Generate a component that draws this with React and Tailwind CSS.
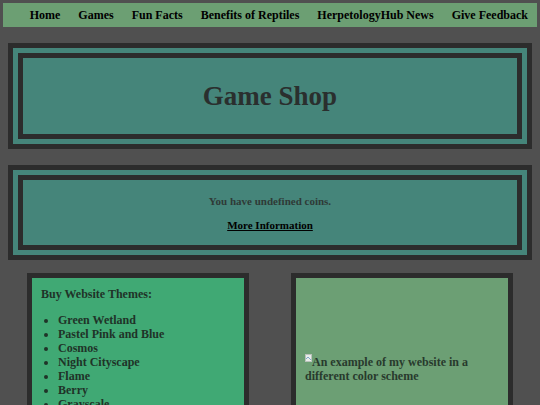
import React from "react";

const navLinks = [
  "Home",
  "Games",
  "Fun Facts",
  "Benefits of Reptiles",
  "HerpetologyHub News",
  "Give Feedback",
];

const themes = [
  "Green Wetland",
  "Pastel Pink and Blue",
  "Cosmos",
  "Night Cityscape",
  "Flame",
  "Berry",
  "Grayscale",
  "Desert Dunes",
];

function FramedBox({ innerHeight, children }) {
  return (
    <div className="mx-[8px] border-[5px] border-[#2c2c2c] bg-[#45857a] p-[5px]">
      <div
        className={`border-[5px] border-[#2c2c2c] bg-[#45857a] flex flex-col items-center justify-center ${innerHeight}`}
      >
        {children}
      </div>
    </div>
  );
}

function BrokenImageIcon() {
  return (
    <svg
      width="7"
      height="8"
      viewBox="0 0 7 8"
      className="inline-block align-top mt-[-1px] mr-[0px]"
    >
      <rect x="0.5" y="0.5" width="6" height="7" fill="#e8ece9" stroke="#b9c2bb" strokeWidth="1" />
      <path d="M1 5 L3 3 L6 6" fill="none" stroke="#7fa7c9" strokeWidth="1" />
    </svg>
  );
}

export default function App() {
  return (
    <div className="h-[405px] overflow-hidden bg-[#505050] pt-[3px] font-['Liberation_Serif',serif]">
      {/* top navigation */}
      <nav className="mx-[3px] h-[24px] bg-[#6c9f73] flex items-center justify-end">
        {navLinks.map((l) => (
          <a
            key={l}
            href="#"
            className="px-[9px] text-[12px] leading-[14px] font-bold text-black"
          >
            {l}
          </a>
        ))}
      </nav>

      <div className="mt-[16px]">
        <FramedBox innerHeight="h-[86px]">
          <h1 className="text-[27px] leading-[31px] font-bold text-[#2a2f2e]">
            Game Shop
          </h1>
        </FramedBox>
      </div>

      <div className="mt-[16px]">
        <FramedBox innerHeight="h-[75px]">
          <p className="text-[11px] leading-[14px] font-bold text-[#2f3a37]">
            You have undefined coins.
          </p>
          <a
            href="#"
            className="mt-[10px] text-[11px] leading-[14px] font-bold text-black underline"
          >
            More Information
          </a>
        </FramedBox>
      </div>

      <div className="mt-[13px] flex items-stretch px-[27px] gap-[42px]">
        <section className="w-[222px] border-[5px] border-[#2c2c2c] bg-[#40a974] px-[9px] pt-[9px] pb-[16px]">
          <h2 className="text-[12px] leading-[14px] font-bold text-[#1f3328]">
            Buy Website Themes:
          </h2>
          <ul className="mt-[12px] list-disc pl-[17px] text-[12px] leading-[14px] font-bold text-[#1f3328]">
            {themes.map((t) => (
              <li key={t}>{t}</li>
            ))}
          </ul>
        </section>

        <section className="w-[222px] border-[5px] border-[#2c2c2c] bg-[#6c9f74] px-[9px] pt-[77px]">
          <p className="text-[12px] leading-[14px] font-bold text-[#283a2d]">
            <BrokenImageIcon />
            An example of my website in a different color scheme
          </p>
        </section>
      </div>
    </div>
  );
}
